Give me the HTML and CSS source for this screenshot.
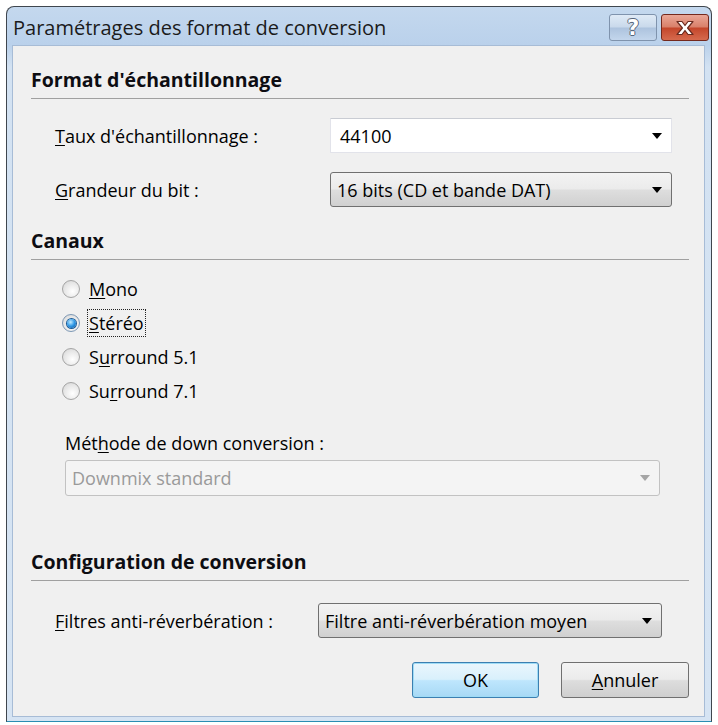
FILE: index.html
```html
<!DOCTYPE html>
<html lang="fr">
<head>
  <meta charset="UTF-8" />
  <title>Paramétrages des format de conversion</title>
  <link rel="stylesheet" href="styles.css">
</head>
<body>
  <div class="window">
    <div class="titlebar">
      <span class="title">Paramétrages des format de conversion</span>
      <div class="caption-buttons">
        <div class="cap-btn help"><span class="help-glyph">?</span></div>
        <div class="cap-btn close">
          <svg width="22" height="16" viewBox="0 0 22 16">
            <path d="M3 1.5 H8 L11 5.5 L14 1.5 H19 L13.6 8 L19 14.5 H14 L11 10.5 L8 14.5 H3 L8.4 8 Z" fill="#fff" stroke="#6a2a1f" stroke-width="1.2" stroke-linejoin="round"/>
          </svg>
        </div>
      </div>
    </div>

    <div class="client">
      <div class="group-title">Format d'échantillonnage</div>
      <div class="field-row first">
        <label class="field-label"><u>T</u>aux d'échantillonnage :</label>
        <div class="combo editable">
          <span class="combo-text">44100</span>
          <span class="arrow"></span>
        </div>
      </div>
      <div class="field-row second">
        <label class="field-label"><u>G</u>randeur du bit :</label>
        <div class="combo">
          <span class="combo-text">16 bits (CD et bande DAT)</span>
          <span class="arrow"></span>
        </div>
      </div>

      <div class="group-title gap">Canaux</div>
      <div class="radios">
        <div class="radio-row"><span class="radio"></span><span class="radio-text"><u>M</u>ono</span></div>
        <div class="radio-row"><span class="radio checked"></span><span class="radio-text focused"><u>S</u>téréo</span></div>
        <div class="radio-row"><span class="radio"></span><span class="radio-text">S<u>u</u>rround 5.1</span></div>
        <div class="radio-row"><span class="radio"></span><span class="radio-text">Su<u>r</u>round 7.1</span></div>
      </div>
      <div class="downmix">
        <div class="downmix-label">Mét<u>h</u>ode de down conversion :</div>
        <div class="combo disabled">
          <span class="combo-text">Downmix standard</span>
          <span class="arrow"></span>
        </div>
      </div>

      <div class="group-title gap-big">Configuration de conversion</div>
      <div class="field-row filter">
        <label class="field-label"><u>F</u>iltres anti-réverbération :</label>
        <div class="combo">
          <span class="combo-text">Filtre anti-réverbération moyen</span>
          <span class="arrow"></span>
        </div>
      </div>

      <div class="button-row">
        <div class="btn default">OK</div>
        <div class="btn"><u>A</u>nnuler</div>
      </div>
    </div>
  </div>
</body>
</html>
```

FILE: styles.css
```css
body { margin: 0; background: #fff; font-family: "Open Sans", "Noto Sans", sans-serif; font-size: 18px; color: #000; }
u { text-decoration-thickness: 1px; text-underline-offset: 2px; }

.window {
  margin: 6px 0 0 6px;
  width: 706px;
  height: 716px;
  box-sizing: border-box;
  border: 1px solid #3f464e;
  border-bottom-color: #2a8db3;
  border-radius: 8px 8px 0 0;
  background: linear-gradient(#c4d8ee, #bad1eb 38px, #d3e2f2 60px, #d6e4f3);
  padding: 0 6px 4px 5px;
  display: flex;
  flex-direction: column;
}

.titlebar { height: 38px; display: flex; justify-content: space-between; align-items: flex-start; }
.title { margin: 9px 0 0 1px; font-size: 20px; line-height: 24px; color: #1b1b1b; }
.caption-buttons { display: flex; gap: 4px; margin: 7px -4px 0 0; }
.cap-btn {
  width: 46px; height: 25px; border-radius: 3px; box-sizing: content-box;
  display: flex; align-items: center; justify-content: center;
}
.help {
  border: 1px solid #7f93ad;
  background: linear-gradient(#dfeaf6, #c9d9eb 48%, #adc3de 52%, #c3d6ec);
}
.help-glyph {
  font-family: "DejaVu Sans", sans-serif; font-weight: bold; font-size: 21px; line-height: 22px; color: #fff;
  text-shadow: -1px 0 #56657a, 1px 0 #56657a, 0 -1px #56657a, 0 1px #56657a;
}
.close {
  border: 1px solid #74291d;
  background: linear-gradient(#eaa797, #d9806a 48%, #c4462b 52%, #d66a4e);
}

.client {
  flex: 1;
  background: #f0f0f0;
  border: 1px solid #a7bcd6;
  padding: 23px 15px 0 18px;
  display: flex;
  flex-direction: column;
}

.group-title {
  font-weight: bold; font-size: 19.5px; line-height: 22px; padding-bottom: 7px;
  border-bottom: 1px solid #a0a0a0; color: #0d0d12;
}
.group-title.gap { margin-top: 23px; }
.group-title.gap-big { margin-top: 55px; }

.field-row { display: flex; align-items: center; padding-left: 24px; }
.field-row.first { margin-top: 19px; }
.field-row.second { margin-top: 19px; }
.field-label { width: 275px; flex: none; }
.field-row.filter { margin-top: 22px; }
.field-row.filter .field-label { width: 263px; }
.field-row.filter .combo { width: 344px; }

.combo {
  width: 342px; height: 35px; box-sizing: border-box;
  border: 1px solid #707070; border-radius: 3px;
  background: linear-gradient(#f3f3f3, #ebebeb 48%, #dedede 52%, #d0d0d0);
  display: flex; align-items: center; justify-content: space-between;
  padding: 0 9px 0 6px;
}
.combo.editable { background: #fff; border-color: #e2e3ea; border-top-color: #c9ccd3; border-radius: 1px; padding-left: 9px; }
.combo.disabled { width: 595px; height: 36px; background: #f4f4f4; border-color: #c2c2c2; color: #9a9a9a; }
.arrow { width: 0; height: 0; border-left: 5px solid transparent; border-right: 5px solid transparent; border-top: 6px solid #000; }
.combo.disabled .arrow { border-top-color: #a5a5a5; }

.radios { display: flex; flex-direction: column; margin-top: 12px; padding-left: 31px; }
.radio-row { height: 34px; display: flex; align-items: center; }
.radio {
  width: 16px; height: 16px; border-radius: 50%; flex: none;
  border: 1px solid #a4a4a4;
  background: radial-gradient(circle at 60% 65%, #ffffff, #e8e8e8 55%, #d2d2d2);
  display: flex; align-items: center; justify-content: center;
}
.radio.checked { border-color: #7d98b5; }
.radio.checked::after {
  content: ""; width: 9px; height: 9px; border-radius: 50%;
  background: radial-gradient(circle at 40% 35%, #c4ecff, #2d97e6 50%, #0b4f96);
  box-shadow: 0 0 0 1px #1d5c97;
}
.radio-text { margin-left: 7px; padding: 0 1px; border: 1px dotted transparent; line-height: 26px; }
.radio-text.focused { border-color: #222; }

.downmix { padding-left: 34px; margin-top: 24px; }
.downmix-label { line-height: 22px; margin-bottom: 6px; }

.button-row { display: flex; justify-content: flex-end; gap: 22px; margin-top: 24px; }
.btn {
  width: 128px; height: 36px; box-sizing: border-box;
  border: 1px solid #707070; border-radius: 3px;
  background: linear-gradient(#f3f3f3, #ebebeb 48%, #dddddd 52%, #cfcfcf);
  display: flex; align-items: center; justify-content: center;
}
.btn.default {
  width: 127px;
  border-color: #3c7fb1;
  box-shadow: inset 0 0 0 1px #9fdcf6;
  background: linear-gradient(#eaf6fd, #d9f0fc 48%, #bee6fd 52%, #a7d9f5);
}
```
